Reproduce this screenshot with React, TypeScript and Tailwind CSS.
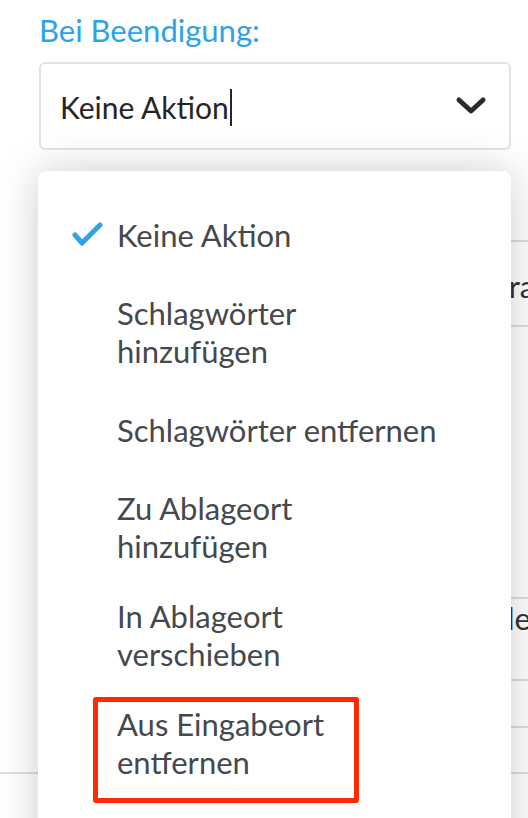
import React from "react";

type Option = {
  label: string;
  selected?: boolean;
  marked?: boolean;
};

const options: Option[] = [
  { label: "Keine Aktion", selected: true },
  { label: "Schlagwörter hinzufügen" },
  { label: "Schlagwörter entfernen" },
  { label: "Zu Ablageort hinzufügen" },
  { label: "In Ablageort verschieben" },
  { label: "Aus Eingabeort entfernen", marked: true },
];

function Check() {
  return (
    <svg width="32" height="26" viewBox="0 0 32 26" fill="none">
      <polyline
        points="3,13 10,21 28,3"
        stroke="#2ba3e6"
        strokeWidth="5"
        strokeLinecap="round"
        strokeLinejoin="round"
      />
    </svg>
  );
}

function Chevron() {
  return (
    <svg width="32" height="20" viewBox="0 0 32 20" fill="none">
      <polyline
        points="4,4 16,15 28,4"
        stroke="#2b2b2b"
        strokeWidth="5"
        strokeLinecap="round"
        strokeLinejoin="round"
      />
    </svg>
  );
}

export default function App() {
  return (
    <div className="relative h-[818px] w-[528px] overflow-hidden bg-white font-['Lato',sans-serif]">
      {/* page underneath */}
      <div className="pl-[39px] pr-[17px] pt-[11px]">
        <div className="text-[31px] leading-[38px] text-[#2ba3e6]">Bei Beendigung:</div>
        <div className="mt-[13px] flex h-[88px] items-center justify-between rounded-md border-2 border-[#e3e3e3] pl-[19px] pr-[22px]">
          <div className="flex items-center pt-[2px]">
            <span className="text-[30px] leading-[38px] text-[#262626]">Keine Aktion</span>
            <span className="ml-[1px] h-[37px] w-[2px] bg-[#262626]" />
          </div>
          <Chevron />
        </div>
      </div>

      <div className="mt-[90px] whitespace-nowrap text-[31px] leading-[38px] text-[#333]">
        <div className="ml-[60px] h-[87px] border-y-2 border-[#dedede] pl-[371px] pt-[25px]">Kamera</div>
        <div className="h-[270px]" />
        <div className="ml-[60px] h-[84px] border-y-2 border-[#dedede] pl-[376px]">Tabelle</div>
        <div className="ml-[60px] h-[47px] border-b-2 border-[#dedede]" />
        <div className="h-[46px] border-b-2 border-[#dedede]" />
      </div>

      {/* dropdown menu */}
      <div className="absolute left-[38px] top-[171px] h-[700px] w-[473px] rounded-lg bg-white pt-[20px] shadow-[0_0_40px_rgba(0,0,0,0.2)]">
        {options.map((o) => (
          <div
            key={o.label}
            className="relative flex min-h-[87px] items-center py-[16px] pl-[79px] pr-[71px] text-[31px] leading-[38px] text-[#45484c]"
          >
            {o.selected && (
              <span className="absolute left-[34px] top-1/2 -translate-y-1/2">
                <Check />
              </span>
            )}
            <span>{o.label}</span>
            {o.marked && (
              <span className="absolute left-[55px] top-[8px] h-[106px] w-[266px] rounded-[3px] border-[5px] border-[#ff2a00]" />
            )}
          </div>
        ))}
      </div>
    </div>
  );
}
